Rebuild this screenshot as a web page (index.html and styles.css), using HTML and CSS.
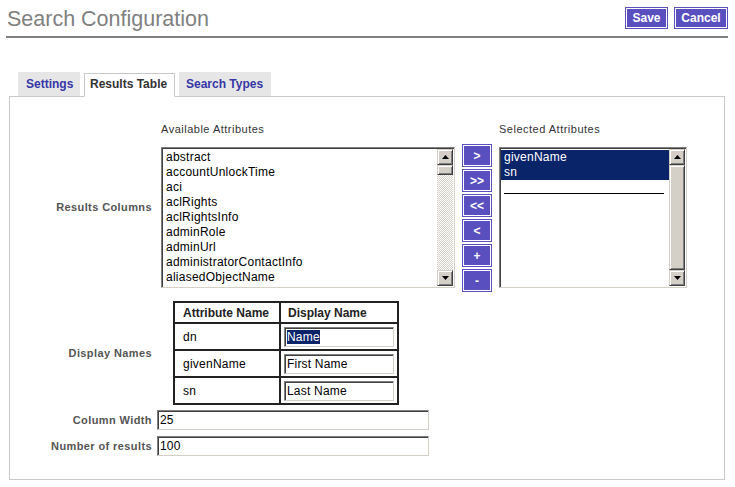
FILE: index.html
```html
<!DOCTYPE html>
<html>
<head>
<meta charset="utf-8">
<title>Search Configuration</title>
<link rel="stylesheet" href="styles.css">
</head>
<body>
<div class="header">
  <h1 class="title">Search Configuration</h1>
  <div class="actions">
    <button class="btn save">Save</button>
    <button class="btn cancel">Cancel</button>
  </div>
</div>

<div class="tabs">
  <div class="tab t-settings">Settings</div>
  <div class="tab t-results active">Results Table</div>
  <div class="tab t-types">Search Types</div>
</div>

<div class="panel">
  <div class="row row-columns">
    <div class="label">Results Columns</div>
    <div class="content columns">
      <div class="col col-avail">
        <div class="collabel">Available Attributes</div>
        <div class="listbox lb-avail">
          <div class="items">
            <div class="opt">abstract</div>
            <div class="opt">accountUnlockTime</div>
            <div class="opt">aci</div>
            <div class="opt">aclRights</div>
            <div class="opt">aclRightsInfo</div>
            <div class="opt">adminRole</div>
            <div class="opt">adminUrl</div>
            <div class="opt">administratorContactInfo</div>
            <div class="opt">aliasedObjectName</div>
          </div>
          <div class="scrollbar">
            <div class="sb-btn"><svg width="7" height="4" viewBox="0 0 7 4"><polygon points="3.5,0 7,4 0,4" fill="#000"/></svg></div>
            <div class="sb-thumb small"></div>
            <div class="sb-track"></div>
            <div class="sb-btn"><svg width="7" height="4" viewBox="0 0 7 4"><polygon points="0,0 7,0 3.5,4" fill="#000"/></svg></div>
          </div>
        </div>
      </div>
      <div class="movebtns">
        <button class="btn mv">&gt;</button>
        <button class="btn mv">&gt;&gt;</button>
        <button class="btn mv">&lt;&lt;</button>
        <button class="btn mv">&lt;</button>
        <button class="btn mv">+</button>
        <button class="btn mv">-</button>
      </div>
      <div class="col col-sel">
        <div class="collabel">Selected Attributes</div>
        <div class="listbox lb-sel">
          <div class="items sel-items">
            <div class="opt selected">givenName</div>
            <div class="opt selected">sn</div>
            <div class="opt sep"><span class="sepline"></span></div>
          </div>
          <div class="scrollbar">
            <div class="sb-btn"><svg width="7" height="4" viewBox="0 0 7 4"><polygon points="3.5,0 7,4 0,4" fill="#000"/></svg></div>
            <div class="sb-thumb full"></div>
            <div class="sb-btn"><svg width="7" height="4" viewBox="0 0 7 4"><polygon points="0,0 7,0 3.5,4" fill="#000"/></svg></div>
          </div>
        </div>
      </div>
    </div>
  </div>

  <div class="row row-names">
    <div class="label">Display Names</div>
    <div class="content">
      <table class="names">
        <tr class="head">
          <th class="c1">Attribute Name</th>
          <th class="c2">Display Name</th>
        </tr>
        <tr>
          <td class="c1">dn</td>
          <td class="c2"><div class="field small"><span class="hl">Name</span></div></td>
        </tr>
        <tr>
          <td class="c1">givenName</td>
          <td class="c2"><div class="field small">First Name</div></td>
        </tr>
        <tr>
          <td class="c1">sn</td>
          <td class="c2"><div class="field small">Last Name</div></td>
        </tr>
      </table>
    </div>
  </div>

  <div class="row row-width">
    <div class="label">Column Width</div>
    <div class="content"><div class="field wide">25</div></div>
  </div>

  <div class="row row-number">
    <div class="label">Number of results</div>
    <div class="content"><div class="field wide">100</div></div>
  </div>
</div>
</body>
</html>
```

FILE: styles.css
```css
* { box-sizing: border-box; }

body {
  margin: 0;
  background: #fff;
  font-family: "Liberation Sans", Arial, sans-serif;
  color: #000;
  width: 735px;
}

/* ---------- header ---------- */
.header {
  display: flex;
  justify-content: space-between;
  align-items: flex-start;
  margin-left: 6px;
  width: 722px;
  padding: 7px 0 5px 0;
  border-bottom: 2px solid #808080;
}
.title {
  margin: 0;
  font-size: 21.5px;
  line-height: 24px;
  font-weight: normal;
  color: #808080;
  padding-left: 1px;
}
.actions {
  display: flex;
  gap: 6px;
}

.btn {
  font-family: "Liberation Sans", Arial, sans-serif;
  font-weight: bold;
  font-size: 12px;
  color: #fff;
  background: #5a4fbf;
  border: 1px solid #5a4fbf;
  box-shadow: inset 0 0 0 1px #fff;
  padding: 0;
  margin: 0;
  display: flex;
  align-items: center;
  justify-content: center;
  cursor: pointer;
}
.btn.save { width: 43px; height: 22px; }
.btn.cancel { width: 54px; height: 22px; }

/* ---------- tabs ---------- */
.tabs {
  display: flex;
  align-items: flex-start;
  gap: 4px;
  margin: 34px 0 0 18px;
  height: 25px;
  position: relative;
  z-index: 1;
}
.tab {
  height: 24px;
  padding: 5px 0 0 8px;
  font-size: 12px;
  line-height: 14px;
  font-weight: bold;
  color: #3636a6;
  background: #e6e6e6;
  white-space: nowrap;
  overflow: hidden;
}
.t-settings { width: 62px; }
.t-results { width: 91px; }
.t-types { width: 92px; padding-left: 7px; }
.tab.active {
  margin-top: 1px;
  padding: 3px 0 0 5px;
  color: #333;
  background: #fff;
  border: 1px solid #c8c8c8;
  border-bottom: 1px solid #fff;
}

/* ---------- panel ---------- */
.panel {
  margin: -1px 0 0 9px;
  width: 716px;
  border: 1px solid #c8c8c8;
  padding: 26px 0 23px 0;
}

.row {
  display: flex;
  align-items: center;
}
.row-names { margin-top: 9px; }
.row-width { margin-top: 5px; }
.row-number { margin-top: 6px; }

.label {
  width: 142px;
  flex: none;
  text-align: right;
  font-size: 11px;
  letter-spacing: 0.4px;
  font-weight: bold;
  color: #555;
  line-height: 13px;
  white-space: nowrap;
}
.content {
  margin-left: 5px;
}

/* ---------- columns row ---------- */
.columns {
  display: flex;
  align-items: flex-start;
  padding-left: 4px;
}
.col { display: flex; flex-direction: column; }
.collabel {
  font-size: 11px;
  letter-spacing: 0.5px;
  line-height: 13px;
  color: #333;
  margin-bottom: 11px;
  white-space: nowrap;
}
.col-avail { width: 294px; }
.col-sel { width: 188px; margin-left: 7px; }

.listbox {
  display: flex;
  height: 141px;
  background: #fff;
  border: 1px solid;
  border-color: #808080 #d4d0c8 #d4d0c8 #808080;
  box-shadow: inset 1px 1px 0 #404040;
}
.items {
  flex: 1;
  overflow: hidden;
  padding: 2px 0 0 4px;
  font-size: 12px;
  letter-spacing: 0.25px;
  line-height: 15px;
}
.opt { height: 15px; white-space: nowrap; }

.sel-items { padding-left: 1px; }
.sel-items .opt { padding-left: 3px; }
.opt.selected { background: #0a246a; color: #fff; }
.opt.sep { padding: 0 5px 0 3px; }
.sepline {
  display: block;
  height: 14px;
  border-bottom: 1px solid #000;
}

.scrollbar {
  width: 16px;
  flex: none;
  margin: 1px 1px 1px 0;
  display: flex;
  flex-direction: column;
}
.sb-btn, .sb-thumb {
  background: #d4d0c8;
  border: 1px solid;
  border-color: #d4d0c8 #404040 #404040 #d4d0c8;
  box-shadow: inset 1px 1px 0 #fff, inset -1px -1px 0 #808080;
}
.sb-btn {
  height: 16px;
  flex: none;
  display: flex;
  align-items: center;
  justify-content: center;
}
.sb-thumb.small { height: 10px; flex: none; }
.sb-thumb.full { flex: 1; }
.sb-track {
  flex: 1;
  background: repeating-conic-gradient(#d4d0c8 0 25%, #fff 0 50%) 0 0 / 2px 2px;
}

.movebtns {
  display: flex;
  flex-direction: column;
  gap: 2px;
  margin: 21px 0 0 7px;
}
.btn.mv { width: 30px; height: 23px; }

/* ---------- display names table ---------- */
.names {
  margin-left: 16px;
  border: 1px solid #222;
  border-spacing: 0;
  font-size: 12px;
}
.names th, .names td {
  border: 1px solid #222;
  padding: 0;
  vertical-align: middle;
  text-align: left;
  box-sizing: content-box;
  white-space: nowrap;
}
.names .head th { height: 19px; font-weight: bold; color: #222; }
.names td { height: 25px; letter-spacing: 0.25px; }
.names th.c1 { width: 96px; padding-left: 8px; }
.names th.c2 { width: 109px; padding-left: 7px; }
.names td.c1 { padding-left: 8px; }
.names td.c2 { padding-left: 3px; }

.field {
  height: 20px;
  border: 1px solid;
  border-color: #808080 #d4d0c8 #d4d0c8 #808080;
  box-shadow: inset 1px 1px 0 #404040;
  font-size: 12px;
  letter-spacing: 0.2px;
  line-height: 17px;
  padding: 1px 0 0 2px;
  background: #fff;
  white-space: nowrap;
}
.field.small { width: 110px; }
.field.wide { width: 272px; }
.hl { background: #0a246a; color: #fff; }
```
